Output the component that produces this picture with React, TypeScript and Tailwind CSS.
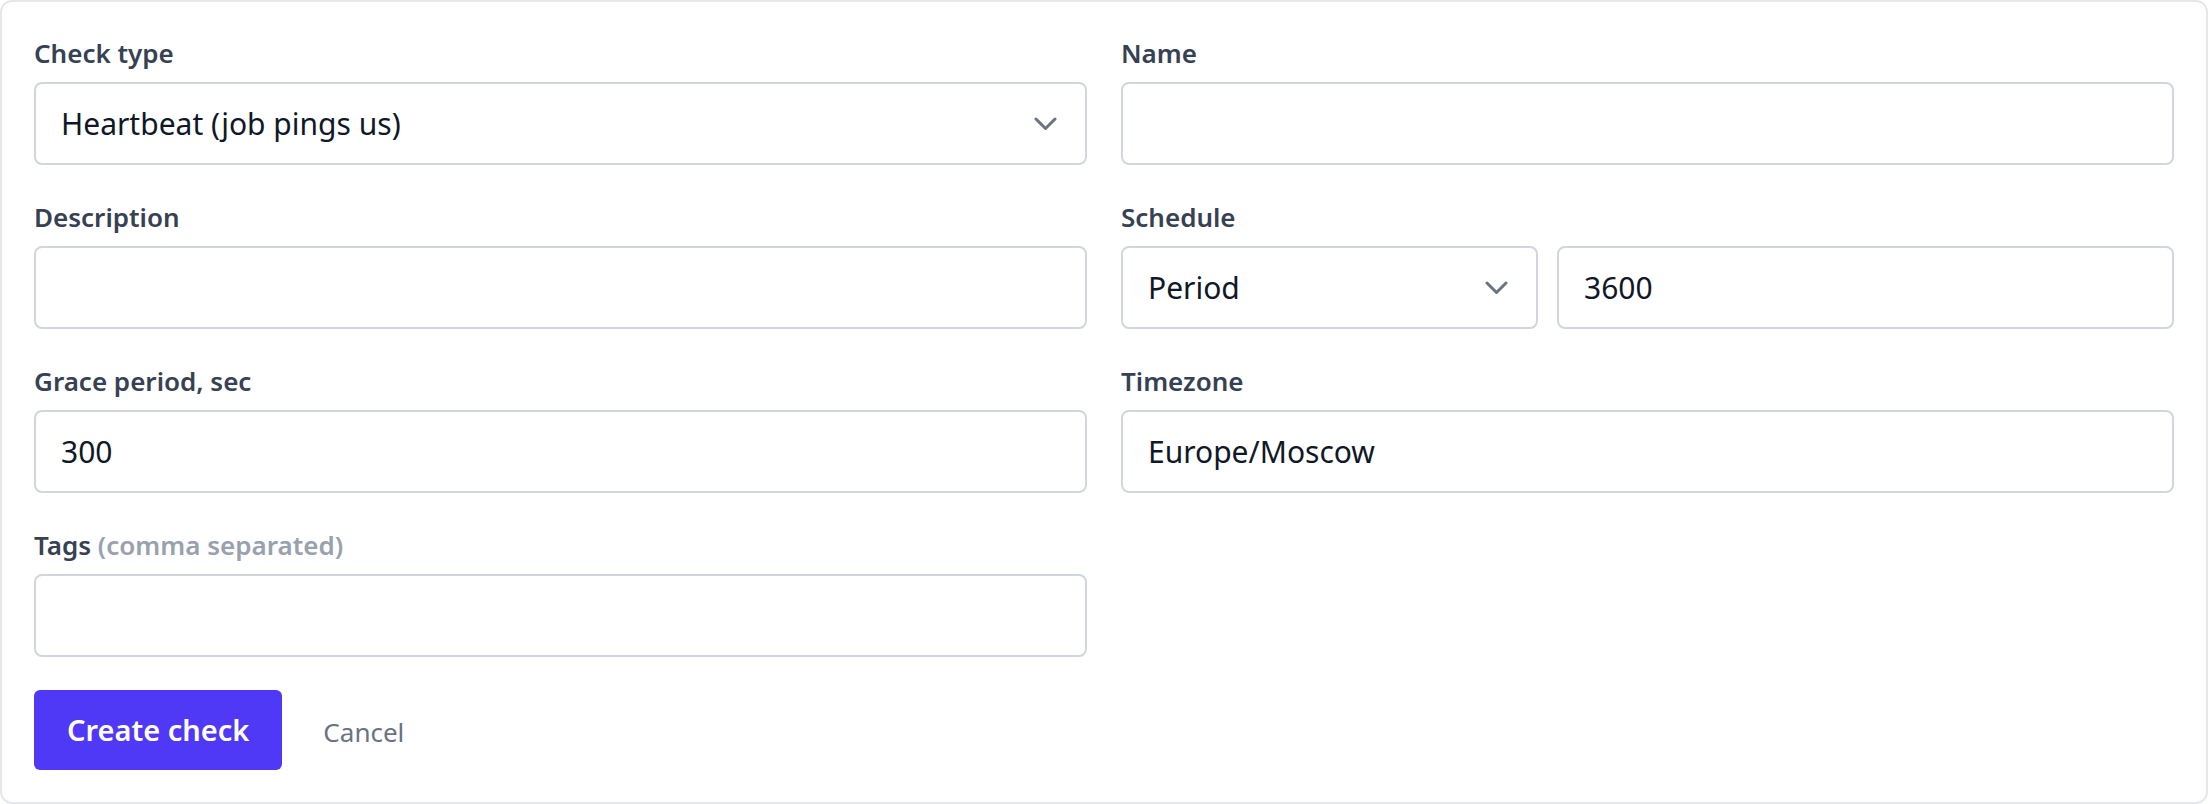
import React from "react";

const Chevron = () => (
  <svg width="23" height="14" viewBox="0 0 23 14" fill="none" className="shrink-0">
    <polyline points="2,2 11.5,11.5 21,2" stroke="#6b7280" strokeWidth="3" strokeLinecap="round" strokeLinejoin="round" />
  </svg>
);

const Label = ({ children }: { children: React.ReactNode }) => (
  <div className="text-[26px] leading-[36px] font-semibold text-gray-700 mb-[11px]">{children}</div>
);

const Input = ({ value = "", className = "" }: { value?: string; className?: string }) => (
  <div className={`h-[83px] border-2 border-gray-300 rounded-lg bg-white flex items-center pl-[25px] text-[30px] text-gray-900 ${className}`}>
    {value}
  </div>
);

const Select = ({ value, className = "" }: { value: string; className?: string }) => (
  <div className={`h-[83px] border-2 border-gray-300 rounded-lg bg-white flex items-center justify-between pl-[25px] pr-[28px] text-[30px] text-gray-900 ${className}`}>
    <span>{value}</span>
    <Chevron />
  </div>
);

export default function App() {
  return (
    <div className="w-[2208px] h-[804px] bg-white" style={{ fontFamily: '"Noto Sans", sans-serif' }}>
      <div className="h-[804px] border-2 border-gray-200 rounded-xl bg-white px-[32px] pt-[33px]">
        <div className="grid grid-cols-2 gap-x-[34px] gap-y-[34px]">
          <div>
            <Label>Check type</Label>
            <Select value="Heartbeat (job pings us)" />
          </div>
          <div>
            <Label>Name</Label>
            <Input />
          </div>
          <div>
            <Label>Description</Label>
            <Input />
          </div>
          <div>
            <Label>Schedule</Label>
            <div className="flex gap-[19px]">
              <Select value="Period" className="w-[417px]" />
              <Input value="3600" className="flex-1" />
            </div>
          </div>
          <div>
            <Label>Grace period, sec</Label>
            <Input value="300" />
          </div>
          <div>
            <Label>Timezone</Label>
            <Input value="Europe/Moscow" />
          </div>
          <div>
            <Label>
              Tags <span className="text-gray-400">(comma separated)</span>
            </Label>
            <Input />
          </div>
        </div>
        <div className="flex items-center mt-[33px]">
          <button className="h-[80px] px-[33px] rounded-md bg-indigo-600 text-white text-[29px] font-semibold">
            Create check
          </button>
          <span className="ml-[41px] text-[26px] text-gray-500 pt-[4px]">Cancel</span>
        </div>
      </div>
    </div>
  );
}
